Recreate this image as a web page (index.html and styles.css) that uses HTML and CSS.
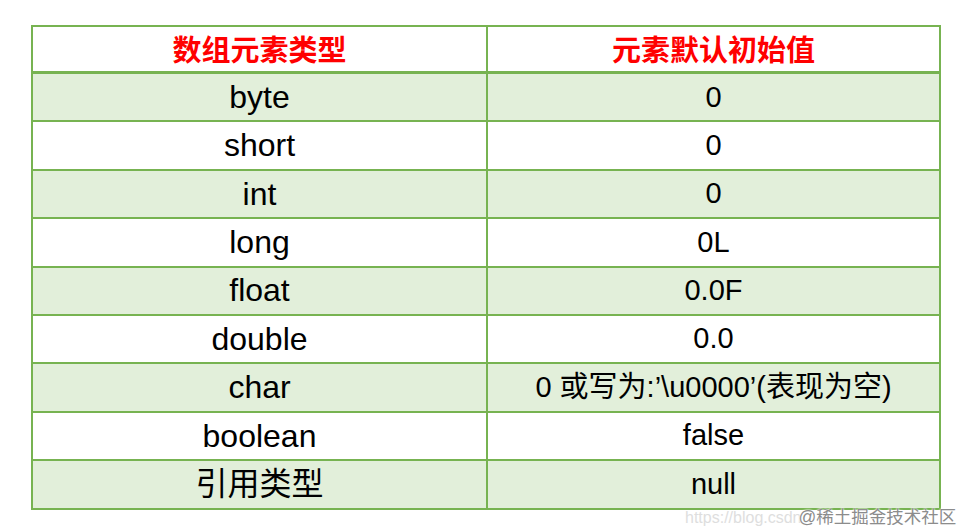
FILE: index.html
```html
<!DOCTYPE html>
<html lang="zh-CN">
<head>
<meta charset="utf-8">
<title>数组元素默认初始值</title>
<link rel="stylesheet" href="styles.css">
</head>
<body>
<div class="page">
  <table class="tbl">
    <thead>
      <tr class="head">
        <th class="c1">数组元素类型</th>
        <th class="c2">元素默认初始值</th>
      </tr>
    </thead>
    <tbody>
      <tr class="odd"><td class="c1">byte</td><td class="c2">0</td></tr>
      <tr class="even"><td class="c1">short</td><td class="c2">0</td></tr>
      <tr class="odd"><td class="c1">int</td><td class="c2">0</td></tr>
      <tr class="even"><td class="c1">long</td><td class="c2">0L</td></tr>
      <tr class="odd"><td class="c1">float</td><td class="c2">0.0F</td></tr>
      <tr class="even"><td class="c1">double</td><td class="c2">0.0</td></tr>
      <tr class="odd"><td class="c1">char</td><td class="c2">0 或写为:’\u0000’(表现为空)</td></tr>
      <tr class="even"><td class="c1">boolean</td><td class="c2">false</td></tr>
      <tr class="odd"><td class="c1">引用类型</td><td class="c2">null</td></tr>
    </tbody>
  </table>
  <div class="watermark"><span class="wm-url">https://blog.csdn</span><span class="wm-name">@稀土掘金技术社区</span></div>
</div>
</body>
</html>
```
FILE: styles.css
```css
html, body {
  margin: 0;
  padding: 0;
  background: #ffffff;
}
.page {
  position: relative;
  width: 965px;
  height: 532px;
  padding: 25px 0 0 31px;
  box-sizing: border-box;
  font-family: "Liberation Sans", "Noto Sans CJK SC", sans-serif;
  color: #000;
}
.tbl {
  border-collapse: collapse;
  width: 910px;
  table-layout: fixed;
}
.tbl th, .tbl td {
  border: 2px solid #77b351;
  text-align: center;
  vertical-align: middle;
  padding: 0;
  line-height: 1.15;
}
.tbl .c1 { width: 453px; }
.tbl th {
  height: 44px;
  color: #ff0000;
  font-weight: bold;
  font-size: 29px;
  font-family: "Noto Sans CJK SC", sans-serif;
  border-bottom: 3px solid #77b351;
  padding-top: 0;
}
.tbl td { height: 46.4px; }
.tbl td.c1 { font-size: 32px; }
.tbl td.c2 { font-size: 29px; }
.odd td { background: #e2efda; }
.even td { background: #ffffff; }
.watermark {
  position: absolute;
  left: 685px;
  top: 503px;
  white-space: nowrap;
  font-family: "Liberation Sans", "Noto Sans CJK SC", sans-serif;
}
.wm-url {
  font-size: 16px;
  color: #dedede;
}
.wm-name {
  font-size: 17.5px;
  color: #8c8c8c;
  margin-left: -3px;
  text-shadow: 0 0 2px #fff, 0 0 2px #fff;
}
```
